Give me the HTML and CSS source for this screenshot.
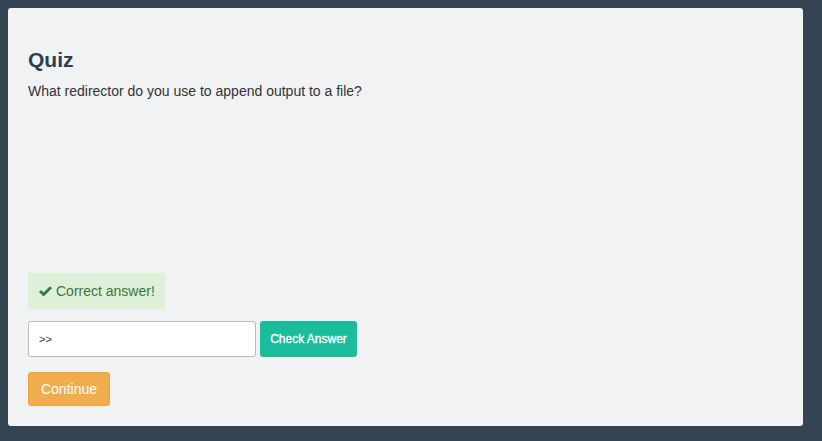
FILE: index.html
```html
<!DOCTYPE html>
<html>
<head>
<meta charset="utf-8">
<link rel="stylesheet" href="styles.css">
</head>
<body>
<div class="card">
  <h2 class="title">Quiz</h2>
  <p class="question">What redirector do you use to append output to a file?</p>
  <div class="spacer"></div>
  <div class="alert"><svg class="check" viewBox="0 0 16 14" width="15" height="13"><path d="M1 7.5 L3.2 5.3 L6 8.1 L12.8 1.3 L15 3.5 L6 12.5 Z" fill="#3c763d"/></svg>Correct answer!</div>
  <div class="row">
    <input class="answer" type="text" value="&gt;&gt;">
    <button class="btn-check">Check Answer</button>
  </div>
  <button class="btn-continue">Continue</button>
</div>
</body>
</html>
```
FILE: styles.css
```css
html, body {
  margin: 0;
  padding: 0;
}
body {
  background: #344452;
  font-family: "Liberation Sans", Arial, sans-serif;
  padding: 8px 19px 15px 8px;
  height: 441px;
  box-sizing: border-box;
}
.card {
  background: #f1f2f4;
  border-radius: 3px;
  height: 418px;
  box-sizing: border-box;
  padding: 40px 20px 20px 20px;
  display: flex;
  flex-direction: column;
  align-items: flex-start;
}
.title {
  margin: 0;
  font-size: 21px;
  font-weight: bold;
  color: #2c3e50;
  line-height: 24px;
}
.question {
  margin: 9px 0 0 0;
  font-size: 14px;
  color: #333;
  line-height: 20px;
}
.spacer {
  flex: 1;
}
.alert {
  background: #dff0d8;
  color: #3c763d;
  font-size: 14px;
  height: 36px;
  box-sizing: border-box;
  padding: 0 10px;
  display: flex;
  align-items: center;
  gap: 3px;
}
.row {
  display: flex;
  gap: 4px;
  margin-top: 12px;
}
.answer {
  width: 228px;
  height: 36px;
  box-sizing: border-box;
  border: 1px solid #bbb;
  border-radius: 3px;
  background: #fff;
  padding: 0 10px;
  font-family: "Liberation Sans", Arial, sans-serif;
  font-size: 11px;
  color: #333;
  outline: none;
}
.btn-check {
  width: 97px;
  height: 36px;
  border: none;
  border-radius: 3px;
  background: #1abc9c;
  color: #fff;
  font-family: "Liberation Sans", Arial, sans-serif;
  font-size: 12px;
  font-weight: normal;
  -webkit-text-stroke: 0.3px #fff;
  padding: 0;
}
.btn-continue {
  margin-top: 15px;
  width: 82px;
  height: 34px;
  border: 1px solid #eea236;
  border-radius: 3px;
  background: #f0ad4e;
  color: #fff;
  font-family: "Liberation Sans", Arial, sans-serif;
  font-size: 14px;
  padding: 0;
}
```
